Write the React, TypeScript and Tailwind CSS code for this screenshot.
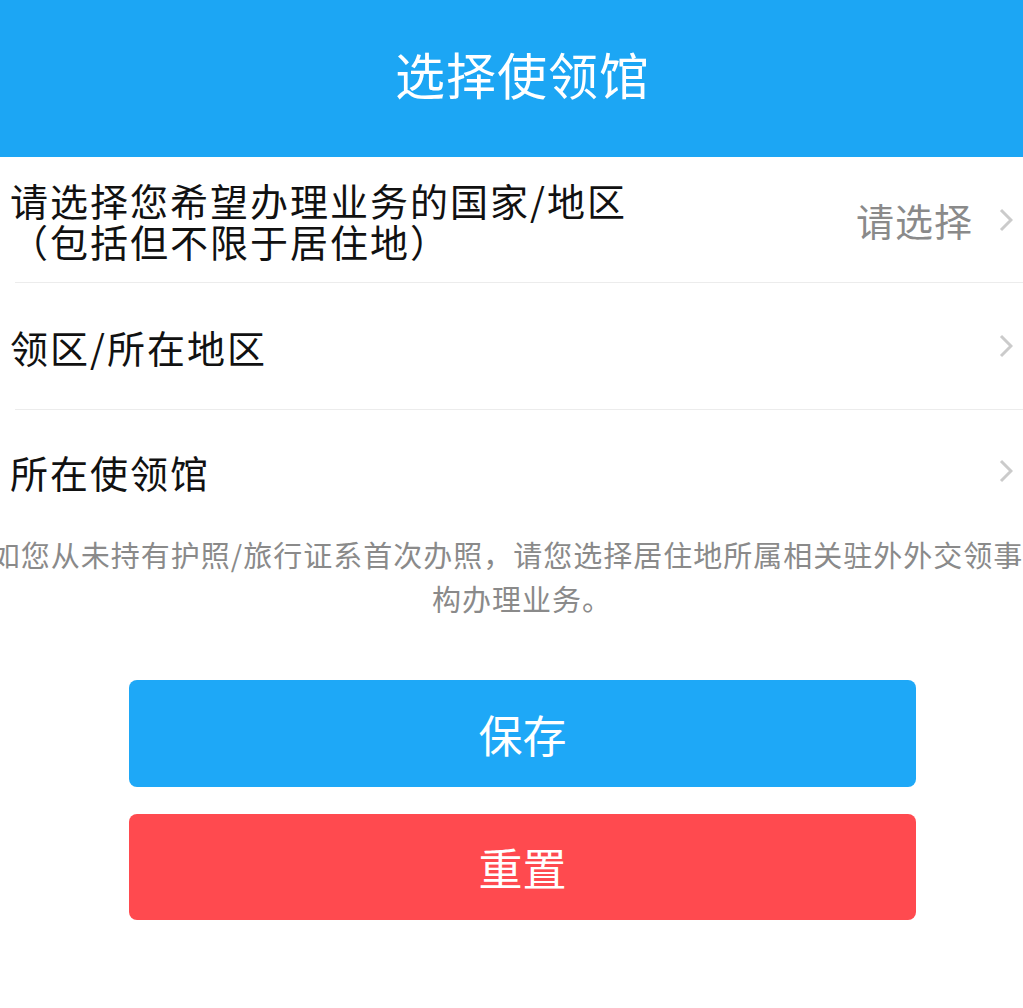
import React from 'react';

const Chevron = () => (
  <svg width="14" height="24" viewBox="0 0 14 24" className="shrink-0">
    <polyline points="2,2 12,12 2,22" fill="none" stroke="#cbcbcb" strokeWidth="3" />
  </svg>
);

type RowProps = {
  lines: string[];
  value?: string;
  height: string;
  divider?: boolean;
};

const Row = ({ lines, value, height, divider = true }: RowProps) => (
  <div className="pl-[15px]">
    <div className={`flex items-center justify-between pr-[10px] ${height} ${divider ? 'border-b border-[#ececec]' : ''}`}>
      <div className="-ml-[5px] text-[38px] leading-[41px] tracking-[2px] text-[#111]">
        {lines.map((l) => (
          <div key={l}>{l}</div>
        ))}
      </div>
      <div className="flex items-center gap-[26px]">
        {value && <span className="text-[38px] leading-[41px] tracking-[1px] text-[#8a8a8a]">{value}</span>}
        <Chevron />
      </div>
    </div>
  </div>
);

export default function App() {
  return (
    <div
      className="w-[1023px] h-[1008px] bg-white overflow-hidden"
      style={{ fontFamily: '"Noto Sans CJK SC", "Noto Sans", sans-serif' }}
    >
      <header className="h-[157px] bg-[#1ca6f4] flex items-center justify-center pb-[12px] pl-[22px]">
        <h1 className="text-[50px] font-normal text-white leading-none tracking-[1px]">选择使领馆</h1>
      </header>

      <Row
        lines={['请选择您希望办理业务的国家/地区', '（包括但不限于居住地）']}
        value="请选择"
        height="h-[126px]"
      />
      <Row lines={['领区/所在地区']} height="h-[127px]" />
      <Row lines={['所在使领馆']} height="h-[122px]" divider={false} />

      <div className="flex flex-col items-center overflow-hidden pl-[21px] text-[29px] leading-[44px] tracking-[1px] text-[#8a8a8a]">
        <p className="whitespace-nowrap shrink-0">如您从未持有护照/旅行证系首次办照，请您选择居住地所属相关驻外外交领事机</p>
        <p className="whitespace-nowrap">构办理业务。</p>
      </div>

      <div className="mt-[60px] ml-[129px] w-[787px] flex flex-col gap-[27px]">
        <button className="h-[107px] rounded-[8px] bg-[#1ea8f7] text-white text-[44px] leading-none">保存</button>
        <button className="h-[106px] rounded-[8px] bg-[#ff4a4f] text-white text-[44px] leading-none">重置</button>
      </div>
    </div>
  );
}
